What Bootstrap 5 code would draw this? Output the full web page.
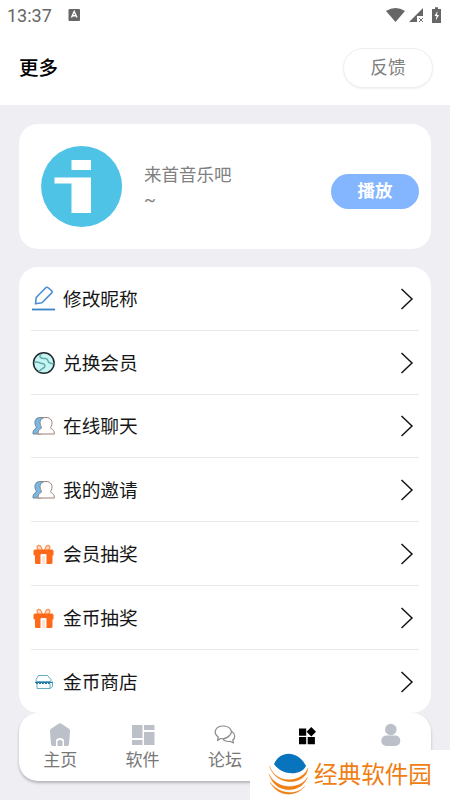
<!DOCTYPE html>
<html lang="zh-CN">
<head>
<meta charset="utf-8">
<meta name="viewport" content="width=device-width, initial-scale=1">
<title>更多</title>
<link rel="stylesheet" href="https://cdn.jsdelivr.net/npm/bootstrap@5.3.0/dist/css/bootstrap.min.css">
<style>
body{background:#eeeef3;font-family:Roboto,"Noto Sans CJK SC",sans-serif;width:450px;height:800px;overflow:hidden}
svg{display:block;flex:none}
.status{height:31px;padding:1px 7px 0 7px;color:#666;font-size:18px;line-height:30px}
.app-head{height:105px}
.title-row{height:74px;padding:0 17px 0 19px}
.page-title{font-size:19.5px;font-weight:500;color:#000;padding-top:2px}
.feedback{width:90px;height:40px;border:1.5px solid #eee;font-size:17.7px;color:#808080;box-shadow:0 1px 2px rgba(0,0,0,.06);padding:0;line-height:37px}
.panel{margin:0 19px;border-radius:19px;background:#fff}
.music{height:125px;margin-top:19px;padding:0 12px 0 22px}
.music-text{font-size:17.5px;line-height:25px;color:#808080;margin-left:21px;padding-top:2px}
.play{width:88px;height:35px;background:#84b5ff;color:#fff;font-size:17.5px;font-weight:700;padding:0;line-height:33px;margin-top:9px}
.menu{margin-top:18px;height:446px;padding:0 12px}
.menu-row{height:63.75px;border-bottom:1px solid #e9e9e9;font-size:18.7px;color:#161616}
.menu-row:last-child{border:0}
.menu-row span{margin-left:7px;padding-top:3px}
.menu-row svg{margin-top:1px}
.tabs{height:68px;box-shadow:0 2px 3px rgba(0,0,0,.24)}
.tab-cell{font-size:17px;line-height:22px;color:#777;padding-top:9px}
.tab-cell span{margin-top:2px}
.watermark{position:absolute;right:0;bottom:0;width:200px;height:50px;background:#fff;color:#ef7e13;font-size:23.6px;line-height:46px;padding-left:18px}
.watermark span{margin-left:4px}
</style>
<script src="https://cdn.jsdelivr.net/npm/bootstrap@5.3.0/dist/js/bootstrap.bundle.min.js"></script>
</head>
<body class="position-relative">
<svg width="0" height="0" class="position-absolute">
<defs>
<symbol id="next" viewBox="0 0 14 24"><path d="M1.5 2 12 12 1.5 22" fill="none" stroke="#151515" stroke-width="1.5"/></symbol>
<symbol id="people" viewBox="0 0 24 24"><path d="M1.500 20c-.2-3.500 1-4.500 2.700-5.500 1-1 .3-2-.2-3C2.500 7.500 4 3.800 8 3.500h4L10 20z" fill="#76b9e6" stroke="#737b85" stroke-width=".9"/><path d="M6.500 20c-.2-3.200 1-4.300 2.700-5.200 1.200-.8.700-1.900.1-2.900C7.300 7.500 9.500 3.500 14.500 3.500s7.300 4 5.300 8.400c-.6 1-1 2.100.1 2.900 1.800.9 3.100 2 2.900 5.200z" fill="#fff" stroke="#9b8178" stroke-width="1" stroke-linejoin="round"/></symbol>
<symbol id="gift" viewBox="0 0 24 24"><path d="M7 8C4 5 6.500 2 9 4l2 4M17 8c3-3 .5-6-2-4l-2 4" fill="#ffd3b9" stroke="#fa9559" stroke-width="1.200"/><path d="M3.500 7.500h17q1.500 0 1.500 1.500v3.500q0 1-1 1v7q0 1.500-1.500 1.500H15v-9q0-1-1-1h-4q-1 0-1 1v9H5q-1.500 0-1.500-1.500v-7Q2 13.500 2 12.500V9q0-1.500 1.500-1.500z" fill="#ff6819"/><path d="M10.500 14h3v8h-3z" fill="#ffe5d8"/></symbol>
</defs>
</svg>

<header class="app-head bg-white">
  <div class="status d-flex align-items-center">
    <span>13:37</span>
    <svg class="ms-3" width="13" height="14" viewBox="0 0 13 14"><rect x=".5" y="0" width="11.500" height="12" rx="1" fill="#666"/><path d="M3.500 8.500 6.200 2.500 9 8.500M4.500 6.700H8" fill="none" stroke="#fff" stroke-width="1.400"/></svg>
    <svg class="ms-auto" width="58" height="18" viewBox="0 0 58 18"><path d="M1 4Q10.500-2 20 4L10.500 15z" fill="#666"/><path d="M38 1v8h-6v6h-8z" fill="#666"/><path d="m34 11 4 4m0-4-4 4" stroke="#777" stroke-width="1"/><path d="M50 .2h3V2h3v14h-9V2h3z" fill="#666"/><path d="m52.500 4-3 5h2l-.7 4.500 3.200-5.500h-2z" fill="#fff"/></svg>
  </div>
  <div class="title-row d-flex align-items-center justify-content-between">
    <h1 class="page-title m-0">更多</h1>
    <button class="feedback btn rounded-pill bg-white">反馈</button>
  </div>
</header>

<main>
  <section class="panel music d-flex align-items-center">
    <svg width="82" height="82" viewBox="0 0 82 82"><circle cx="40.600" cy="40.500" r="40.500" fill="#4fc3e5"/><path d="M30.500 14H50v10H30.500zM13.500 31.500H50V67H30.500V37.500h-17z" fill="#fff"/></svg>
    <div class="music-text">来首音乐吧<br>~</div>
    <button class="play btn rounded-pill ms-auto">播放</button>
  </section>

  <section class="panel menu">
    <div class="menu-row d-flex align-items-center">
      <svg width="25" height="25" viewBox="0 0 25 25"><path d="m4.500 17.800.7-6.300L14.500 2q1.500-1.500 3 0l3 2.600q1.300 1.200 0 2.500L11 16.800z" fill="none" stroke="#4b8fd0" stroke-width="1.600" stroke-linejoin="round"/><path d="M1 23.500h23" stroke="#3983c8" stroke-width="1.800"/></svg>
      <span>修改昵称</span><svg class="ms-auto me-1" width="16" height="24"><use href="#next"/></svg>
    </div>
    <div class="menu-row d-flex align-items-center">
      <svg width="25" height="24" viewBox="0 0 25 24"><circle cx="12.800" cy="12" r="10.300" fill="#c4f5f2" stroke="#20282d" stroke-width="1.500"/><path d="M10.500 3C7 6 10 8 14 7.500c4-.5 2 4 5 4.500l3.500 1M3 11.500c4-2 5 1 8 1s4 3 1.500 4.500S9 18.500 8 21" fill="none" stroke="#63a9a8" stroke-width="1.500"/></svg>
      <span>兑换会员</span><svg class="ms-auto me-1" width="16" height="24"><use href="#next"/></svg>
    </div>
    <div class="menu-row d-flex align-items-center"><svg width="25" height="24"><use href="#people"/></svg><span>在线聊天</span><svg class="ms-auto me-1" width="16" height="24"><use href="#next"/></svg></div>
    <div class="menu-row d-flex align-items-center"><svg width="25" height="24"><use href="#people"/></svg><span>我的邀请</span><svg class="ms-auto me-1" width="16" height="24"><use href="#next"/></svg></div>
    <div class="menu-row d-flex align-items-center"><svg width="25" height="24"><use href="#gift"/></svg><span>会员抽奖</span><svg class="ms-auto me-1" width="16" height="24"><use href="#next"/></svg></div>
    <div class="menu-row d-flex align-items-center"><svg width="25" height="24"><use href="#gift"/></svg><span>金币抽奖</span><svg class="ms-auto me-1" width="16" height="24"><use href="#next"/></svg></div>
    <div class="menu-row d-flex align-items-center">
      <svg width="25" height="24" viewBox="0 0 25 24"><path d="M7.500 5.500h9L20 9.500v2H5v-2zM6 14v4.500h13V14M21.500 11.500v5L19 18.500" fill="none" stroke="#62aac5" stroke-width="1"/><path d="M4 12.500h17.500M4.500 12.500q1.500 3 3 0 1.500 3 3 0 1.500 3 3 0 1.500 3 3 0 1.500 3 3 0" fill="none" stroke="#247e9f" stroke-width="1"/></svg>
      <span>金币商店</span><svg class="ms-auto me-1" width="16" height="24"><use href="#next"/></svg>
    </div>
  </section>
</main>

<nav class="panel tabs row gx-0 text-center">
  <div class="tab-cell col d-flex flex-column align-items-center"><svg width="24" height="25" viewBox="0 0 24 25"><path d="M10.500 1.800q1.500-1.200 3 0l7.500 5q1.200 1 1 2.500l-1 13q0 1.700-1.700 1.700H16v-5q0-3-4-3t-4 3v5H4.700q-1.700 0-1.700-1.700l-1-13q-.2-1.500 1-2.500z" fill="#bcc0c9"/><path d="M9.500 24v-4.500q0-1.500 2.500-1.500t2.500 1.500V24z" fill="#bcc0c9"/></svg><span>主页</span></div>
  <div class="tab-cell col d-flex flex-column align-items-center"><svg width="24" height="25" viewBox="0 0 24 25"><path d="M1 3h10.500v13H1zM13 3h10.500v5H13zM1 18h10.500v5H1zM13 10h10.500v13H13z" fill="#bcc0c9"/></svg><span>软件</span></div>
  <div class="tab-cell col d-flex flex-column align-items-center"><svg width="24" height="25" viewBox="0 0 24 25"><path d="M4.500 18.500 5.300 15C-.5 11 2.500 4 10 4s10.500 5.500 6.500 9.500C13.500 17 9 16.800 7.500 16.500zM18.800 9.500c4 2.500 3.500 6.500 1 8.500l.7 3-3.500-1.700q-4 .8-7-1.800" fill="none" stroke="#8b8b8b" stroke-width="1.200" stroke-linejoin="round"/></svg><span>论坛</span></div>
  <div class="tab-cell col d-flex flex-column align-items-center"><svg width="24" height="25" viewBox="0 0 24 25"><path d="M4 6.500h7.200v7.200H4zM4 15h7.200v7.200H4zM12.700 15h7.200v7.200h-7.200zM16.300 5l4.700 4.700-4.700 4.700-4.700-4.700z" fill="#000"/></svg></div>
  <div class="tab-cell col d-flex flex-column align-items-center"><svg width="24" height="25" viewBox="0 0 24 25"><circle cx="12.800" cy="7.500" r="5.800" fill="#bcc0c9"/><rect x="3.300" y="13.500" width="19" height="10.500" rx="5" fill="#bcc0c9"/></svg></div>
</nav>

<aside class="watermark d-flex align-items-center">
  <svg width="42" height="44" viewBox="0 0 42 44"><path d="M6 11C12-3 30-3 38 13 33 23 14 23 6 11z" fill="#0874bd"/><path d="M1.500 13C8 32 34 30 40 15c-1 17-32 20-38.500-2zM1 21c7 16 32 16 38.500 3-5 16-32 19-38.500-3zM2 29c8 12 27 14 35 4-8 11-27 12-35-4z" fill="#ef7e13" stroke="#ef7e13" stroke-width=".3"/></svg>
  <span>经典软件园</span>
</aside>
</body>
</html>
